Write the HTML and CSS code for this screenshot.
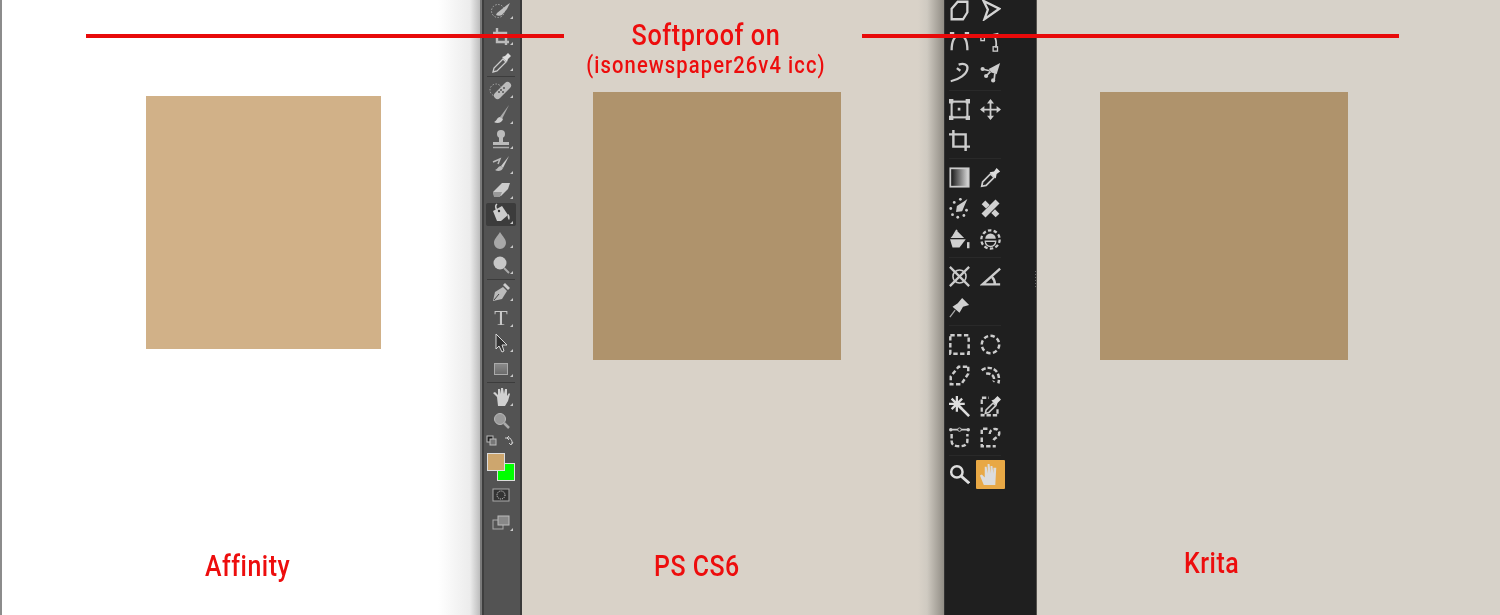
FILE: index.html
```html
<!DOCTYPE html>
<html lang="en">
<head>
<meta charset="utf-8">
<title>Softproof comparison</title>
<link rel="stylesheet" href="styles.css">
</head>
<body>
<main class="stage">
  <section class="pane pane-affinity">
    <div class="swatch swatch-affinity"></div>
    <p class="label label-affinity">Affinity</p>
  </section>

  <nav class="ps-bar">
    <div class="ps-tools">
      <svg class="ps-icon h26" viewBox="0 0 26 26"><circle cx="10" cy="13" r="6.5" fill="none" stroke="#aaa" stroke-dasharray="1.5 1.5"/><path d="M9 15L19 7l3-2-3 6-5 6c-2 1-4 1-6 0z" fill="#c0c0c0"/><path class="tick" d="M22 21h3v-3z"/></svg>
      <svg class="ps-icon h26" viewBox="0 0 26 26"><path d="M9 4v14h12M5 9h13v12" fill="none" stroke="#bbb" stroke-width="2.4"/><path class="tick" d="M22 21h3v-3z"/></svg>
      <svg class="ps-icon h26" viewBox="0 0 26 26"><path d="M5 22l1-4 9-9 3 3-9 9z" fill="none" stroke="#ccc" stroke-width="1.3"/><path d="M14 7l3-1 3-3 3 3-3 3-1 3z" fill="#ddd"/><path class="tick" d="M22 21h3v-3z"/></svg>
      <div class="ps-sep"></div>
      <svg class="ps-icon h26" viewBox="0 0 26 26"><circle cx="8" cy="13" r="6" fill="none" stroke="#aaa" stroke-dasharray="1.5 1.5"/><path d="M7 16L17 6a3.5 3.5 0 0 1 5 5L12 21a3.5 3.5 0 0 1-5-5z" fill="#bbb"/><circle cx="13" cy="13" r="1" fill="#555"/><circle cx="16" cy="11" r="1" fill="#555"/><circle cx="15" cy="15" r="1" fill="#555"/><circle cx="11" cy="15" r="1" fill="#555"/><path class="tick" d="M22 21h3v-3z"/></svg>
      <svg class="ps-icon h25" viewBox="0 0 26 25"><path d="M21 2L12 14l2 2z" fill="#aaa"/><path d="M12 14c-3 0-3 4-6 5 3 2 8 1 9-3z" fill="#ccc"/><path class="tick" d="M22 21h3v-3z"/></svg>
      <svg class="ps-icon h25" viewBox="0 0 26 25"><circle cx="13" cy="6" r="4" fill="#bbb"/><path d="M11 8h4v6h-4zM5 14h16v3H5z" fill="#bbb"/><path d="M5 19.500h16" stroke="#aaa" stroke-width="1.5"/><path class="tick" d="M22 21h3v-3z"/></svg>
      <svg class="ps-icon h25" viewBox="0 0 26 25"><path d="M21 3l-8 10 2 2z" fill="#ccc"/><path d="M13 13c-3 0-3 3-6 4 3 2 7 1 8-2z" fill="#bbb"/><path d="M5 9l7-3-2 5" fill="none" stroke="#bbb" stroke-width="1.5"/><path class="tick" d="M22 21h3v-3z"/></svg>
      <svg class="ps-icon h25" viewBox="0 0 26 25"><path d="M5 14L14 5h8l-2 6-7 7H6z" fill="#ccc"/><path d="M5 14h9l-2 5H6z" fill="#999"/><path class="tick" d="M22 21h3v-3z"/></svg>
      <span class="ps-active"><svg class="ps-icon h23" viewBox="0 0 26 23"><path d="M5 8l9-5 6 9-7 6H9z" fill="#ccc"/><path d="M9 1c-3 2 0 8 2 7" fill="none" stroke="#ccc" stroke-width="1.5"/><circle cx="11" cy="8" r="1.200" fill="#333"/><path d="M20 11c2 1 2 5 1 6-1-1-2-4-1-6z" fill="#ccc"/><path class="tick" d="M22 21h3v-3z"/></svg></span>
      <svg class="ps-icon h26" viewBox="0 0 26 26"><path d="M12 5c3 5 6 7 6 11a6 6 0 0 1-12 0c0-4 3-6 6-11z" fill="#a8a8a8"/><path class="tick" d="M22 21h3v-3z"/></svg>
      <svg class="ps-icon h26" viewBox="0 0 26 26"><circle cx="12" cy="10" r="6.500" fill="#c8c8c8"/><path d="M16 15l5 5" stroke="#aaa" stroke-width="2"/><path class="tick" d="M22 21h3v-3z"/></svg>
      <div class="ps-sep"></div>
      <svg class="ps-icon h26" viewBox="0 0 26 26"><path d="M5 21l2-9 8-5 4 4-5 8z" fill="#bbb"/><path d="M6 20l5-6" stroke="#444"/><path d="M15 5l2-2 5 5-2 2z" fill="#ccc"/><path class="tick" d="M22 21h3v-3z"/></svg>
      <svg class="ps-icon h25" viewBox="0 0 26 25"><text class="ps-type" x="13" y="19" text-anchor="middle">T</text><path class="tick" d="M22 21h3v-3z"/></svg>
      <svg class="ps-icon h25" viewBox="0 0 26 25"><path d="M8 3v15l3-3 3 6 2-1-2-6h5z" fill="#333" stroke="#d8d8d8" stroke-width="1"/><path class="tick" d="M22 21h3v-3z"/></svg>
      <svg class="ps-icon h26" viewBox="0 0 26 26"><defs><linearGradient id="rect-fill" x1="0" y1="0" x2="0" y2="1"><stop offset="0" stop-color="#8b8b8b"/><stop offset="1" stop-color="#6a6a6a"/></linearGradient></defs><rect x="6.500" y="7.500" width="13" height="11" fill="url(#rect-fill)" stroke="#aaa"/><path class="tick" d="M22 21h3v-3z"/></svg>
      <div class="ps-sep"></div>
      <svg class="ps-icon h25 ps-after-sep" viewBox="0 0 26 25"><path d="M9 13L5 9l2-1 3 3V5l2 0 1 5V4h2l1 6 1-5h2v7l2-3 1 1-2 7-3 5h-7z" fill="#d0d0d0"/><path class="tick" d="M22 22h3v-3z"/></svg>
      <svg class="ps-icon h24" viewBox="0 0 26 24"><circle cx="12" cy="10" r="5.500" fill="#9a9a9a" stroke="#bbb"/><path d="M16 14l5 5" stroke="#aaa" stroke-width="2.500"/></svg>
      <svg class="ps-mini" viewBox="0 0 30 12"><rect x="1" y="1" width="6" height="6" fill="#222" stroke="#bbb"/><rect x="4" y="4" width="6" height="6" fill="#777" stroke="#bbb"/><path d="M19 3h5l2 3v3M23 1l-2 2 2 2M27 7l-2 3-2-2" fill="none" stroke="#ccc"/></svg>
      <div class="ps-colors">
        <div class="ps-bg"></div>
        <div class="ps-fg"></div>
      </div>
      <svg class="ps-icon h18 ps-mask" viewBox="0 0 26 18"><rect x="5" y="2" width="16" height="12" fill="#333" stroke="#aaa"/><circle cx="13" cy="8" r="4" fill="none" stroke="#ddd" stroke-dasharray="1 1"/></svg>
      <svg class="ps-icon h26 ps-screen" viewBox="0 0 26 26"><rect x="5" y="10" width="10" height="9" fill="#555" stroke="#aaa"/><rect x="10" y="6" width="11" height="9" fill="#888" stroke="#bbb"/><path class="tick" d="M22 21h3v-3z"/></svg>
    </div>
  </nav>

  <section class="pane pane-ps">
    <div class="swatch swatch-proof"></div>
    <p class="label label-ps">PS CS6</p>
  </section>

  <nav class="krita-bar">
    <div class="krita-grid">
      <svg class="k-icon" viewBox="0 0 24 24"><path d="M3 10L10 2h11v12l-5 8H3z" fill="none" stroke="#d4d4d4" stroke-width="2.600"/></svg>
      <svg class="k-icon" viewBox="0 0 24 24"><path d="M4 1l18 9-17 12 4-11z" fill="none" stroke="#d4d4d4" stroke-width="2.600"/></svg>
      <svg class="k-icon" viewBox="0 0 24 24"><path d="M3 22C3 12 6 5 12 5s9 7 9 17" fill="none" stroke="#ccc" stroke-width="2.600"/><path d="M1 1h5v5H1zM18 1h5v5h-5z" fill="#ccc"/></svg>
      <svg class="k-icon" viewBox="0 0 24 24"><path d="M3 7l18-4M16 5c3 5 3 10 2 14" fill="none" stroke="#ccc" stroke-width="2"/><rect x="1" y="6" width="4" height="5" fill="none" stroke="#ccc" stroke-width="1.500"/><rect x="15" y="18" width="5" height="5" fill="none" stroke="#ccc" stroke-width="1.500"/></svg>
      <svg class="k-icon" viewBox="0 0 24 24"><path d="M11 3c6-2 11 0 10 5-1 6-9 12-19 14" fill="none" stroke="#ccc" stroke-width="2.600"/><path d="M9 7l4 3" stroke="#ccc" stroke-width="2.600"/></svg>
      <svg class="k-icon" viewBox="0 0 24 24"><path d="M10 8L23 1l-4 13-6-2z" fill="#ccc"/><path d="M2 8l9 2M7 16l5-5M16 22l1-9" stroke="#ccc" stroke-width="2"/><circle cx="3" cy="8" r="2.400" fill="#ccc"/><circle cx="7" cy="16" r="2.400" fill="#ccc"/><circle cx="15" cy="21" r="2.400" fill="#ccc"/></svg>
      <div class="k-gap"></div>
      <svg class="k-icon" viewBox="0 0 24 24"><rect x="3" y="3" width="18" height="18" fill="none" stroke="#ccc" stroke-width="2.400"/><path d="M0 0h5v5H0zM19 0h5v5h-5zM0 19h5v5H0zM19 19h5v5h-5zM10 10h3v3h-3z" fill="#ccc"/></svg>
      <svg class="k-icon" viewBox="0 0 24 24"><path d="M12 2v20M2 12h20" stroke="#ccc" stroke-width="2"/><path d="M12 0l-4 5h8zM12 24l-4-5h8zM0 12l5-4v8zM24 12l-5-4v8z" fill="#ccc"/></svg>
      <svg class="k-icon" viewBox="0 0 24 24"><path d="M5 0v19h19M0 5h19v19" fill="none" stroke="#ccc" stroke-width="2.800"/></svg>
      <div class="k-slot"></div>
      <div class="k-gap"></div>
      <svg class="k-icon" viewBox="0 0 24 24"><defs><linearGradient id="grad"><stop offset="0" stop-color="#111"/><stop offset="1" stop-color="#ddd"/></linearGradient></defs><rect x="1.500" y="1.500" width="21" height="21" fill="url(#grad)" stroke="#ccc" stroke-width="2"/></svg>
      <svg class="k-icon" viewBox="0 0 24 24"><path d="M2 22l1-5 9-9 4 4-9 9z" fill="none" stroke="#ccc" stroke-width="2"/><path d="M11 6l5-1 3-4 4 4-4 3-1 5z" fill="#ddd"/></svg>
      <svg class="k-icon" viewBox="0 0 24 24"><path d="M8 16l1-7 8-5 4-3-3 7-3 7z" fill="#ccc"/><circle cx="2" cy="12" r="1.600" fill="#ccc"/><circle cx="6" cy="5" r="1.600" fill="#ccc"/><circle cx="13" cy="1.500" r="1.600" fill="#ccc"/><circle cx="20" cy="14" r="1.600" fill="#ccc"/><circle cx="17" cy="20" r="1.600" fill="#ccc"/><circle cx="10" cy="22" r="1.600" fill="#ccc"/><circle cx="4" cy="19" r="1.600" fill="#ccc"/></svg>
      <svg class="k-icon" viewBox="0 0 24 24"><path d="M4 20L20 4" stroke="#d0d0d0" stroke-width="6.500"/><path d="M4 5l5 5M15 15l5 5" stroke="#d0d0d0" stroke-width="6"/></svg>
      <svg class="k-icon" viewBox="0 0 24 24"><path d="M1 11L9 2l10 10-7 9H4z" fill="#d0d0d0"/><path d="M5 8L9 1" stroke="#ccc" stroke-width="2"/><path d="M1 11h18" stroke="#1f1f1f" stroke-width="1.500"/><path d="M22 15v7" stroke="#ccc" stroke-width="2.800"/></svg>
      <svg class="k-icon" viewBox="0 0 24 24"><circle cx="12" cy="12" r="10.500" fill="none" stroke="#ccc" stroke-width="2.600" stroke-dasharray="4 2.600"/><path d="M6 11a6 6 0 0 1 12 0z" fill="#ccc"/><path d="M6 14h12a6 6 0 0 1-12 0z" fill="none" stroke="#ccc" stroke-width="1.500"/></svg>
      <div class="k-gap"></div>
      <svg class="k-icon" viewBox="0 0 24 24"><path d="M1 1l22 22M23 1L1 23" stroke="#ccc" stroke-width="2.600"/><circle cx="12" cy="12" r="7.500" fill="none" stroke="#ccc" stroke-width="1.800"/></svg>
      <svg class="k-icon" viewBox="0 0 24 24"><path d="M23 3L3 21h20M14 13c2 2 3 5 3 8" fill="none" stroke="#ccc" stroke-width="2.800"/></svg>
      <svg class="k-icon" viewBox="0 0 24 24"><path d="M15 1l8 8-7 2-4 7-8-7 6-4z" fill="#d0d0d0"/><path d="M7 15l-6 8" stroke="#aaa" stroke-width="1.500"/></svg>
      <div class="k-slot"></div>
      <div class="k-gap"></div>
      <svg class="k-icon" viewBox="0 0 24 24"><rect x="1.500" y="1.500" width="21" height="21" fill="none" stroke="#ccc" stroke-width="2.800" stroke-dasharray="5 2.800"/></svg>
      <svg class="k-icon" viewBox="0 0 24 24"><circle cx="12" cy="12" r="10" fill="none" stroke="#ccc" stroke-width="2.800" stroke-dasharray="5 2.800"/></svg>
      <svg class="k-icon" viewBox="0 0 24 24"><path d="M22 2v8l-8 12H2v-9l9-11z" fill="none" stroke="#ccc" stroke-width="2.800" stroke-dasharray="5 2.800"/></svg>
      <svg class="k-icon" viewBox="0 0 24 24"><path d="M2 6c5-4 14-4 18 3 2 4 2 8 1 12M7 10c4-1 8 1 9 5 0 2 0 3-1 4" fill="none" stroke="#ccc" stroke-width="2.800" stroke-dasharray="5 2.200"/></svg>
      <svg class="k-icon" viewBox="0 0 24 24"><path d="M8 8l15 15" stroke="#ddd" stroke-width="3"/><path d="M9 0v18M0 9h18M3 3l12 12M15 3L3 15" stroke="#ddd" stroke-width="2.600"/></svg>
      <svg class="k-icon" viewBox="0 0 24 24"><path d="M2 9V2h8M2 13v9h18v-8" fill="none" stroke="#ccc" stroke-width="2.600" stroke-dasharray="5 2.200"/><path d="M6 20l1-4 8-8 3 3-8 8z" fill="none" stroke="#ccc" stroke-width="1.800"/><path d="M13 5l3-1 4-4 4 4-4 4-1 3z" fill="#ddd"/></svg>
      <svg class="k-icon" viewBox="0 0 24 24"><path d="M3 8v8c0 4 3 6 9 6s9-2 9-6V8" fill="none" stroke="#ccc" stroke-width="2.800" stroke-dasharray="5 2.500"/><path d="M2 3h20" stroke="#ccc" stroke-width="2"/><circle cx="2" cy="3" r="2" fill="#ccc"/><circle cx="22" cy="3" r="2" fill="#ccc"/><circle cx="12" cy="3" r="2" fill="#222" stroke="#ccc"/></svg>
      <svg class="k-icon" viewBox="0 0 24 24"><path d="M2 8V2h8M2 12v10h16M11 8c0-7 11-8 11-1 0 5-7 5-7 10" fill="none" stroke="#ccc" stroke-width="2.800" stroke-dasharray="5 2.500"/></svg>
      <div class="k-gap"></div>
      <svg class="k-icon" viewBox="0 0 24 24"><circle cx="9" cy="9" r="6.500" fill="none" stroke="#ddd" stroke-width="2.800"/><path d="M14 14l9 8" stroke="#ddd" stroke-width="3.400"/></svg>
      <span class="k-active"><svg class="k-hand" viewBox="0 0 24 24"><path d="M5 23L1 13l2-1 3 3V4h2l1 7V1h2l1 10V3h2l1 8V5h3l-1 18z" fill="#dcdcdc"/></svg></span>
    </div>
    <div class="k-handle"></div>
  </nav>

  <section class="pane pane-krita">
    <div class="swatch swatch-proof"></div>
    <p class="label label-krita">Krita</p>
  </section>

  <div class="rule rule-left"></div>
  <div class="rule rule-right"></div>
  <div class="heading">
    <p class="heading-main">Softproof on</p>
    <p class="heading-sub">(isonewspaper26v4 icc)</p>
  </div>
</main>
</body>
</html>
```
FILE: styles.css
```css
html, body { margin: 0; height: 100%; overflow: hidden; background: #fff; }
.stage { position: relative; display: flex; width: 1500px; height: 615px; overflow: hidden; font-family: Roboto, "Liberation Sans", sans-serif; font-weight: 500; font-variant-ligatures: none; }
.pane { position: relative; display: flex; flex-direction: column; box-sizing: border-box; height: 615px; }
.pane-affinity { width: 480px; background: linear-gradient(90deg, #fff 0, #fff 436px, #ececec 468px, #bdbdbd 478px); border-left: 2px solid #8c8c8c; padding: 96px 0 0 144px; }
.pane-ps { width: 422px; background: linear-gradient(90deg, #d9d2c8 0, #d9d2c8 396px, #cfcac1 405px, #918d85 422px); padding: 92px 0 0 71px; }
.pane-krita { width: 463px; background: #d7d2c9; padding: 92px 0 0 63px; }
.swatch { flex: none; }
.swatch-affinity { width: 235px; height: 253px; background: #d1b188; }
.swatch-proof { width: 248px; height: 268px; background: #af936c; }
.label { margin: 0; width: fit-content; color: #ed0d0d; font-size: 30px; line-height: 34px; letter-spacing: .6px; white-space: nowrap; transform: scaleX(.83); transform-origin: left center; }
.label-affinity { margin: 200px 0 0 59px; }
.label-ps { margin: 189px 0 0 61px; }
.label-krita { margin: 186px 0 0 84px; }

.ps-bar { position: relative; flex: none; width: 42px; height: 615px; box-sizing: border-box; background: #535353; border-left: 4px solid #3e3e3e; border-right: 2px solid #3a3a3a; }
.ps-bar::before { content: ""; position: absolute; left: -4px; top: 0; width: 2px; height: 615px; background: #7a7a7a; }
.ps-tools { display: flex; flex-direction: column; align-items: center; margin-top: -2px; padding-right: 2px; height: 615px; overflow: hidden; }
.ps-icon { display: block; width: 26px; flex: none; filter: blur(.35px); }
.h26 { height: 26px; } .h25 { height: 25px; } .h24 { height: 24px; } .h23 { height: 23px; } .h18 { height: 18px; }
.tick { fill: #c8c8c8; }
.ps-sep { width: 28px; height: 1px; background: #3c3c3c; flex: none; }
.ps-after-sep { margin-top: 1px; }
.ps-active { display: block; flex: none; width: 30px; height: 23px; margin-bottom: 1px; background: #3c3c3c; border-radius: 2px; }
.ps-active .ps-icon { margin: 0 auto; }
.ps-type { font-family: "Liberation Serif", serif; font-size: 22px; fill: #c8c8c8; }
.ps-mini { display: block; flex: none; width: 30px; height: 12px; margin: 2px 0 0; filter: blur(.3px); }
.ps-colors { position: relative; flex: none; width: 30px; height: 28px; margin: 6px 0 0; }
.ps-fg { position: absolute; left: 1px; top: 0; box-sizing: border-box; width: 18px; height: 18px; background: #cda66e; border: 1px solid #ddd; }
.ps-bg { position: absolute; left: 11px; top: 10px; box-sizing: border-box; width: 18px; height: 18px; background: #00ff00; border: 1px solid #ddd; }
.ps-mask { margin-top: 6px; }
.ps-screen { margin-top: 5px; }

.krita-bar { position: relative; flex: none; width: 93px; height: 615px; box-sizing: border-box; background: #1f1f1f; border-left: 1px solid #333; border-right: 1px solid #55524e; z-index: 1; overflow: hidden; }
.krita-grid { display: grid; grid-template-columns: 21px 21px; column-gap: 10px; margin: -5px 0 0 4px; align-items: center; justify-items: center; }
.k-icon { display: block; width: 21px; height: 21px; margin: 5px 0; filter: blur(.35px); }
.k-gap { grid-column: 1 / -1; justify-self: stretch; height: 6px; background: linear-gradient(#1f1f1f 0 2px, #292929 2px 3px, #1f1f1f 3px); }
.k-slot { width: 21px; height: 31px; }
.k-active { display: flex; align-items: center; justify-content: center; width: 29px; height: 29px; margin: 1px 0; background: #e8a845; border-radius: 1px; }
.k-hand { display: block; width: 23px; height: 23px; filter: blur(.35px); }
.k-handle { position: absolute; left: 90px; top: 271px; width: 2px; height: 17px; background: repeating-linear-gradient(#666 0 1px, transparent 1px 3px); }

.rule { position: absolute; top: 34px; height: 4px; background: #e80a0a; z-index: 3; }
.rule-left { left: 86px; width: 478px; }
.rule-right { left: 862px; width: 537px; }
.heading { position: absolute; left: 522px; top: 17px; width: 368px; text-align: center; color: #ed0d0d; z-index: 3; transform: scaleX(.84); }
.heading-main { margin: 0; font-size: 30px; line-height: 36px; letter-spacing: .7px; }
.heading-sub { margin: 0; font-size: 24px; line-height: 24px; letter-spacing: 1.3px; }
```
